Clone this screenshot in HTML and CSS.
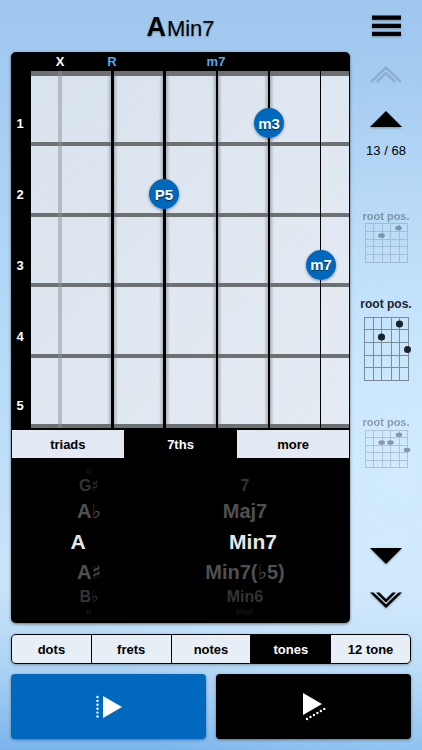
FILE: index.html
```html
<!DOCTYPE html>
<html lang="en">
<head>
  <meta charset="UTF-8">
  <meta name="viewport" content="width=device-width, initial-scale=1.0">
  <title>A Min7</title>
  <link rel="stylesheet" href="styles.css">
</head>
<body>
  <div class="app">
    <main class="main">
      <div class="chord">
        <h1 class="title"><strong>A</strong>Min7</h1>

        <div class="panel">
          <svg class="fretboard" viewBox="0 0 339 377" role="img" aria-label="A Min7 fretboard">
            <defs>
              <linearGradient id="neck" x1="0" y1="0" x2="1" y2="1">
                <stop offset="0" stop-color="#d9e3ed"/>
                <stop offset="1" stop-color="#e5ebf3"/>
              </linearGradient>
              <linearGradient id="shade" x1="0" y1="0" x2="1" y2="0">
                <stop offset="0" stop-color="#000" stop-opacity="0"/>
                <stop offset="0.5" stop-color="#000" stop-opacity="0.3"/>
                <stop offset="1" stop-color="#000" stop-opacity="0"/>
              </linearGradient>
              <filter id="shadow" x="-30%" y="-30%" width="160%" height="160%">
                <feDropShadow dx="0" dy="1" stdDeviation="1.5" flood-opacity="0.4"/>
              </filter>
            </defs>
            <rect x="20" y="19" width="318" height="357" fill="url(#neck)"/>

            <!-- soft shade beside each string -->
            <g fill="url(#shade)">
              <rect x="96" y="19" width="11" height="357"/>
              <rect x="148" y="19" width="11" height="357"/>
              <rect x="201" y="19" width="10" height="357"/>
              <rect x="253" y="19" width="10" height="357"/>
            </g>

            <!-- frets -->
            <g fill="#6d7174">
              <rect x="20" y="19" width="318" height="5"/>
              <rect x="20" y="90" width="318" height="4"/>
              <rect x="20" y="161" width="318" height="4"/>
              <rect x="20" y="231" width="318" height="4"/>
              <rect x="20" y="302" width="318" height="4"/>
              <rect x="20" y="372" width="318" height="4"/>
            </g>

            <!-- strings -->
            <rect x="47" y="19" width="4" height="357" fill="#8b9197" opacity="0.5"/>
            <rect x="100" y="19" width="3" height="357"/>
            <rect x="152" y="19" width="3" height="357"/>
            <rect x="205" y="19" width="2" height="357"/>
            <rect x="257" y="19" width="2" height="357"/>
            <rect x="309" y="19" width="1" height="357"/>

            <g class="string-label">
              <text x="49" y="14" fill="#fff">X</text>
              <text x="101" y="14">R</text>
              <text x="205" y="14">m7</text>
            </g>

            <g class="fret-number">
              <text x="9" y="76">1</text>
              <text x="9" y="147">2</text>
              <text x="9" y="218">3</text>
              <text x="9" y="289">4</text>
              <text x="9" y="358">5</text>
            </g>

            <g fill="#0069bd" filter="url(#shadow)">
              <circle cx="258" cy="71" r="15"/>
              <circle cx="153" cy="142" r="15"/>
              <circle cx="310" cy="213" r="15"/>
            </g>
            <g class="note">
              <text x="258" y="77">m3</text>
              <text x="153" y="148">P5</text>
              <text x="310" y="218">m7</text>
            </g>
          </svg>

          <div class="kinds">
            <button type="button" class="kind">triads</button>
            <button type="button" class="kind kind-active" aria-pressed="true">7ths</button>
            <button type="button" class="kind">more</button>
          </div>

          <div class="picker">
            <ul class="wheel wheel-root" role="listbox" aria-label="Root">
              <li class="peek" role="option">G</li>
              <li class="far" role="option">G<span class="accidental">♯</span></li>
              <li class="near" role="option">A<span class="accidental">♭</span></li>
              <li class="selected" role="option" aria-selected="true">A</li>
              <li class="near" role="option">A<span class="accidental">♯</span></li>
              <li class="far" role="option">B<span class="accidental">♭</span></li>
              <li class="peek" role="option">B</li>
            </ul>
            <ul class="wheel wheel-type" role="listbox" aria-label="Chord type">
              <li class="peek" role="option"></li>
              <li class="far" role="option">7</li>
              <li class="near" role="option">Maj7</li>
              <li class="selected" role="option" aria-selected="true">Min7</li>
              <li class="near" role="option">Min7(<span class="accidental">♭</span>5)</li>
              <li class="far" role="option">Min6</li>
              <li class="peek" role="option">Maj6</li>
            </ul>
          </div>
        </div>
      </div>

      <aside class="side">
        <button type="button" class="icon-btn menu" aria-label="Menu">
          <svg width="30" height="21" viewBox="0 0 30 21">
            <path d="M1 .5h29v4.300H1zM1 8.700h29V13H1zM1 16.800h29v4.300H1z"/>
          </svg>
        </button>
        <button type="button" class="icon-btn first" aria-label="First" disabled>
          <svg width="32" height="16" viewBox="0 0 32 16">
            <path d="M1 16 16 1.500 31 16M7 16l9-9 9 9" fill="none" stroke="#000" stroke-width="2"/>
          </svg>
        </button>
        <button type="button" class="icon-btn prev" aria-label="Previous">
          <svg width="32" height="16" viewBox="0 0 32 16"><path d="M0 16 16 0l16 16z"/></svg>
        </button>
        <p class="count">13 / 68</p>

        <button type="button" class="thumb thumb-faded thumb-first">
          <span class="thumb-label">root pos.</span>
          <svg width="50" height="40" viewBox="0 0 50 40">
            <path class="thumb-grid" d="M4 .5h43M4 8.5h43M4 16.5h43M4 23.5h43M4 31.5h43M4 39.5h43M4.5 0v40M12.5 0v40M21.5 0v40M29.5 0v40M38.5 0v40M46.5 0v40"/>
            <ellipse cx="20.5" cy="12.5" rx="3.3" ry="2.3"/>
            <ellipse cx="37.5" cy="5" rx="3.3" ry="2.3"/>
          </svg>
        </button>
        <button type="button" class="thumb thumb-current" aria-current="true">
          <span class="thumb-label">root pos.</span>
          <svg width="50" height="65" viewBox="0 0 50 65">
            <path class="thumb-grid" d="M3 1.5h45M3 13.5h45M3 26.5h45M3 39.5h45M3 51.5h45M3 64.5h45M3.5 1v64M12.5 1v64M20.5 1v64M30.5 1v64M38.5 1v64M47.5 1v64"/>
            <circle cx="38.5" cy="8" r="3.6"/>
            <circle cx="20.5" cy="21" r="3.6"/>
            <circle cx="46.5" cy="33.5" r="3.5"/>
          </svg>
        </button>
        <button type="button" class="thumb thumb-faded thumb-last">
          <span class="thumb-label">root pos.</span>
          <svg width="50" height="40" viewBox="0 0 50 40">
            <path class="thumb-grid" d="M4 1.5h43M4 8.5h43M4 16.5h43M4 23.5h43M4 31.5h43M4 38.5h43M4.5 1v38M12.5 1v38M21.5 1v38M29.5 1v38M38.5 1v38M46.5 1v38"/>
            <ellipse cx="20.7" cy="13.5" rx="3.3" ry="2.3"/>
            <ellipse cx="29.5" cy="13.5" rx="3.3" ry="2.3"/>
            <ellipse cx="38" cy="5.7" rx="3.3" ry="2.3"/>
            <ellipse cx="46" cy="21" rx="3.3" ry="2.3"/>
          </svg>
        </button>

        <button type="button" class="icon-btn next" aria-label="Next">
          <svg width="32" height="16" viewBox="0 0 32 16"><path d="M0 0h32L16 16z"/></svg>
        </button>
        <button type="button" class="icon-btn last" aria-label="Last">
          <svg width="32" height="16" viewBox="0 0 32 16">
            <path d="M0 .5h3.500L16 12.500 28.500 .5H32L16 16z"/>
            <path d="M6 .5h3.500L16 7l6.500-6.500H26l-10 10z"/>
          </svg>
        </button>
      </aside>
    </main>

    <div class="modes">
      <button type="button" class="mode">dots</button>
      <button type="button" class="mode">frets</button>
      <button type="button" class="mode">notes</button>
      <button type="button" class="mode mode-active" aria-pressed="true">tones</button>
      <button type="button" class="mode">12 tone</button>
    </div>

    <div class="players">
      <button type="button" class="play play-strum" aria-label="Strum">
        <svg width="28" height="30" viewBox="0 0 28 30" fill="#fff">
          <path d="M8 4v22l19-11z"/>
          <path d="M2.5 5v21" stroke="#fff" stroke-width="2.400" stroke-linecap="round" stroke-dasharray="0 3.900"/>
        </svg>
      </button>
      <button type="button" class="play play-arpeggio" aria-label="Arpeggio">
        <svg width="28" height="30" viewBox="0 0 28 30" fill="#fff">
          <path d="M3 1v22l19-11z"/>
          <path d="M7 27l18-10.500" stroke="#fff" stroke-width="2.400" stroke-linecap="round" stroke-dasharray="0 4"/>
        </svg>
      </button>
    </div>
  </div>
</body>
</html>
```

FILE: styles.css
```css
* {
  box-sizing: border-box;
}
body {
  margin: 0;
  min-height: 100vh;
  font-family: "Liberation Sans", Arial, sans-serif;
  color: #000;
  background:
    radial-gradient(ellipse at 95% 62%, rgba(214, 238, 255, 0.8), rgba(214, 238, 255, 0) 60%),
    linear-gradient(#9fc7ee, #a9cff2 20%, #b8dcf8 50%, #cbe3f8 78%, #b0d5f5 88%, #7ab5ec);
}
button {
  margin: 0;
  padding: 0;
  border: 0;
  background: none;
  color: inherit;
  font: inherit;
  cursor: pointer;
}
svg {
  display: block;
}
.app {
  display: flex;
  flex-direction: column;
  padding: 0 11px 10px;
}
.main {
  display: flex;
  gap: 11px;
}
.chord {
  flex: 1;
  min-width: 0;
}
.title {
  margin: 0;
  padding-top: 12px;
  height: 52px;
  font-size: 22px;
  font-weight: 400;
  line-height: 30px;
  text-align: center;
  text-shadow: 0 1px 2px rgba(0, 0, 0, 0.3);
}
.title strong {
  margin-right: 1px;
  font-size: 27px;
}

/* fretboard and chord picker */
.panel {
  overflow: hidden;
  border-radius: 5px;
  background: #000;
  box-shadow: 0 1px 3px rgba(0, 0, 0, 0.5);
}
.fretboard {
  width: 100%;
  height: auto;
}
.fretboard text {
  font-weight: 700;
  text-anchor: middle;
}
.string-label {
  fill: #55a9ee;
  font-size: 13px;
}
.fret-number {
  fill: #fff;
  font-size: 13px;
}
.note {
  fill: #fff;
  font-size: 15px;
  text-shadow: 0 1px 1px rgba(0, 0, 0, 0.6);
}
.kinds {
  display: grid;
  grid-template-columns: repeat(3, 1fr);
  gap: 1px;
  padding: 1px;
}
.kind {
  height: 28px;
  background: #e2e9f2;
  font-size: 13px;
  font-weight: 700;
}
.kind-active {
  background: #000;
  color: #fff;
}
.picker {
  display: flex;
  padding: 9px 27px 8px 0;
}
.wheel {
  flex: 1;
  margin: 0;
  padding: 0;
  list-style: none;
  color: #505050;
  font-weight: 700;
  text-align: center;
}
.accidental {
  font-family: "DejaVu Sans", sans-serif;
  font-weight: 400;
}
.near {
  height: 28px;
  font-size: 20px;
  line-height: 28px;
}
.far {
  height: 22px;
  color: #333;
  font-size: 16px;
  line-height: 22px;
}
.selected {
  height: 33px;
  color: #e6e6e6;
  font-size: 21px;
  line-height: 33px;
}
.wheel-root .selected {
  padding-right: 22px;
}
.wheel-type .selected {
  padding-left: 16px;
}
/* rows that are just rolling out of sight */
.peek {
  height: 7px;
  color: #141414;
  font-size: 8px;
  line-height: 7px;
}

/* right hand column */
.side {
  display: flex;
  flex-direction: column;
  align-items: center;
  width: 50px;
}
.icon-btn svg {
  overflow: visible;
  filter: drop-shadow(0 1px 1px rgba(0, 0, 0, 0.3));
}
.menu {
  margin-top: 15px;
}
.first {
  margin-top: 30px;
  opacity: 0.15;
}
.prev {
  margin-top: 29px;
}
.count {
  margin: 16px 0 0;
  font-size: 13px;
  line-height: 16px;
  white-space: nowrap;
}
.thumb {
  display: flex;
  flex-direction: column;
  align-items: center;
  color: #1c242b;
  font-weight: 700;
  white-space: nowrap;
}
.thumb svg {
  fill: currentColor;
}
.thumb-grid {
  fill: none;
  stroke: #7c8b98;
}
.thumb-current {
  margin-top: 34px;
  gap: 5px;
  font-size: 12px;
  line-height: 14px;
}
.thumb-faded {
  gap: 1px;
  font-size: 11px;
  line-height: 12px;
  opacity: 0.4;
}
.thumb-first {
  margin-top: 51px;
}
.thumb-last {
  margin-top: 35px;
}
.next {
  margin-top: 79px;
}
.last {
  margin-top: 28px;
}

/* label mode switch */
.modes {
  display: grid;
  grid-template-columns: repeat(5, 1fr);
  gap: 1px;
  overflow: hidden;
  margin-top: 11px;
  border: 1px solid #000;
  border-radius: 5px;
  background: #000;
  box-shadow: 0 1px 3px rgba(0, 0, 0, 0.3);
}
.mode {
  height: 28px;
  background: #e8eef5;
  font-size: 13px;
  font-weight: 700;
}
.mode-active {
  background: #000;
  color: #fff;
}

.players {
  display: grid;
  grid-template-columns: 1fr 1fr;
  gap: 10px;
  margin-top: 10px;
}
.play {
  display: flex;
  align-items: center;
  justify-content: center;
  height: 65px;
  border-radius: 4px;
  box-shadow: 0 1px 3px rgba(0, 0, 0, 0.4);
}
.play-strum {
  background: #0069bd;
}
.play-arpeggio {
  background: #000;
}
```
